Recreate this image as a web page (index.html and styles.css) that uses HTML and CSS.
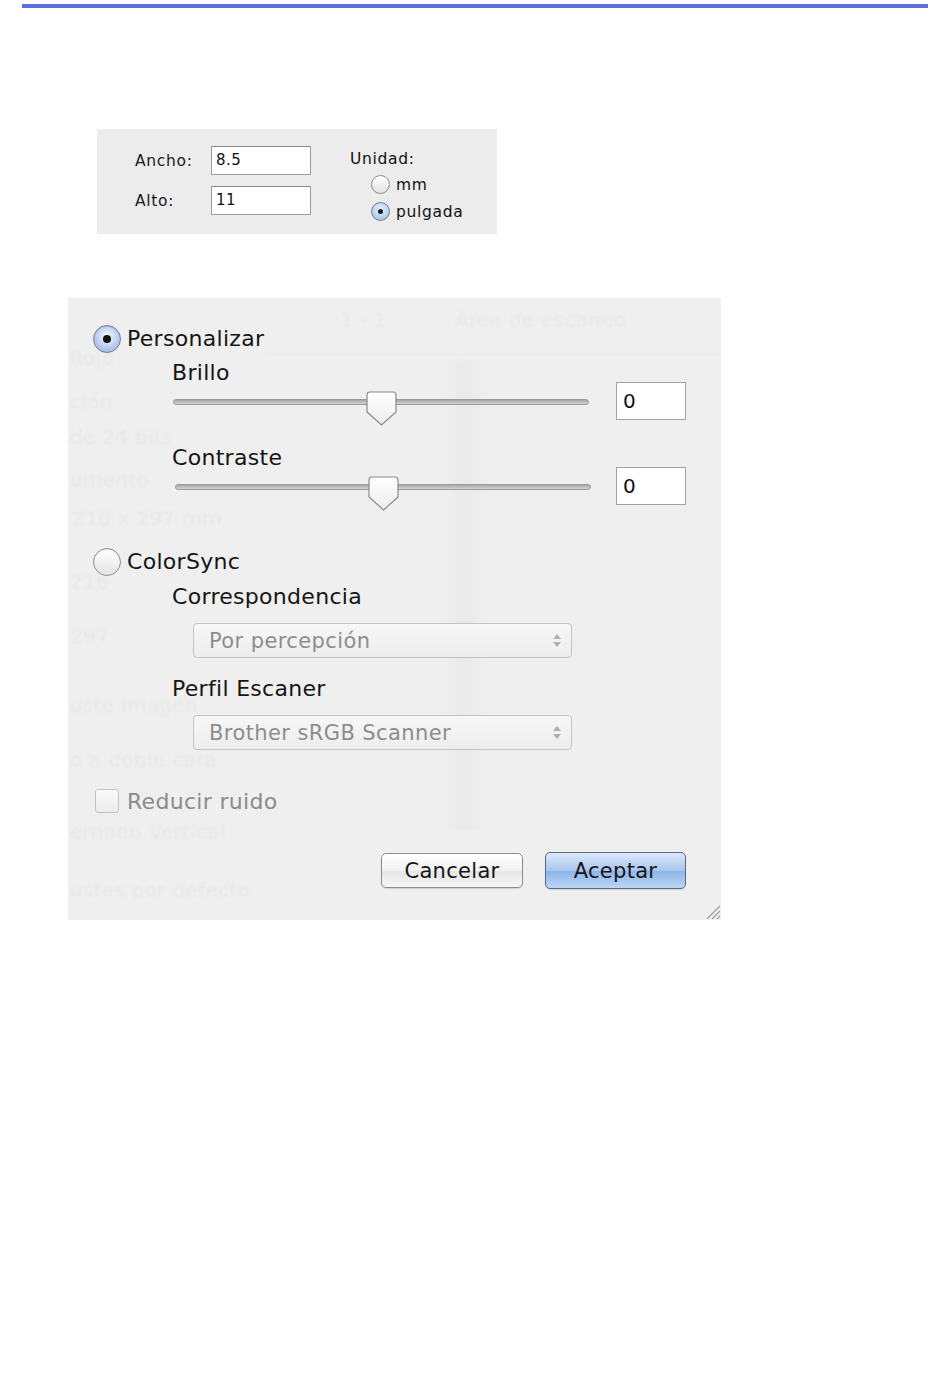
FILE: index.html
```html
<!DOCTYPE html>
<html>
<head>
  <meta charset="UTF-8">
  <title>Ajustes de escaneo</title>
  <link rel="stylesheet" href="styles.css">
</head>
<body>
  <div class="rule"></div>

  <!-- Tamaño de documento personalizado -->
  <div class="size-panel">
    <div class="size-fields">
      <div class="field-row">
        <span class="field-label">Ancho:</span>
        <div class="text-box">8.5</div>
      </div>
      <div class="field-row">
        <span class="field-label">Alto:</span>
        <div class="text-box">11</div>
      </div>
    </div>
    <div class="unit-group">
      <div class="unit-title">Unidad:</div>
      <div class="unit-option"><span class="mini-radio"></span>mm</div>
      <div class="unit-option"><span class="mini-radio checked"></span>pulgada</div>
    </div>
  </div>

  <!-- Diálogo de ajuste de color -->
  <div class="dialog">
    <div class="ghost">
      <span class="g1">1 - 1</span>
      <span class="g2">Área de escaneo</span>
      <span class="g3">Rojo</span>
      <span class="g4">ción</span>
      <span class="g5">de 24 bits</span>
      <span class="g6">umento</span>
      <span class="g7">210 x 297 mm</span>
      <span class="g8">216</span>
      <span class="g9">297</span>
      <span class="g10">uste imagen</span>
      <span class="g11">o a doble cara</span>
      <span class="g12">ernado Vertical</span>
      <span class="g13">ustes por defecto</span>
      <div class="ghost-strip"></div>
      <div class="ghost-line"></div>
    </div>

    <div class="option-row first">
      <span class="radio checked"></span>
      <span class="option-label">Personalizar</span>
    </div>

    <div class="sub-label brillo">Brillo</div>
    <div class="slider-row">
      <div class="slider">
        <div class="track"></div>
        <svg class="thumb" width="31" height="35" viewBox="0 0 31 35">
          <defs>
            <linearGradient id="tg1" x1="0" y1="0" x2="0" y2="1">
              <stop offset="0" stop-color="#ffffff"/>
              <stop offset="1" stop-color="#ececec"/>
            </linearGradient>
          </defs>
          <path d="M4 1 H27 Q30 1 30 4 V21 L15.5 34 L1 21 V4 Q1 1 4 1 Z" fill="url(#tg1)" stroke="#8a8a8a" stroke-width="1.2"/>
        </svg>
      </div>
      <div class="value-box">0</div>
    </div>

    <div class="sub-label contraste">Contraste</div>
    <div class="slider-row second">
      <div class="slider">
        <div class="track"></div>
        <svg class="thumb" width="31" height="35" viewBox="0 0 31 35">
          <path d="M4 1 H27 Q30 1 30 4 V21 L15.5 34 L1 21 V4 Q1 1 4 1 Z" fill="url(#tg1)" stroke="#8a8a8a" stroke-width="1.2"/>
        </svg>
      </div>
      <div class="value-box">0</div>
    </div>

    <div class="option-row colorsync">
      <span class="radio"></span>
      <span class="option-label">ColorSync</span>
    </div>

    <div class="sub-label corr">Correspondencia</div>
    <div class="popup first-popup">
      <span>Por percepción</span>
      <span class="popup-arrows"><i class="up"></i><i class="down"></i></span>
    </div>

    <div class="sub-label perfil">Perfil Escaner</div>
    <div class="popup second-popup">
      <span>Brother sRGB Scanner</span>
      <span class="popup-arrows"><i class="up"></i><i class="down"></i></span>
    </div>

    <div class="check-row">
      <span class="checkbox"></span>
      <span class="check-label">Reducir ruido</span>
    </div>

    <div class="button-row">
      <button class="btn">Cancelar</button>
      <button class="btn primary">Aceptar</button>
    </div>

    <svg class="grip" width="16" height="16" viewBox="0 0 16 16">
      <path d="M3 16 L16 3 M8 16 L16 8 M13 16 L16 13" stroke="#9a9a9a" stroke-width="1.2"/>
    </svg>
  </div>
</body>
</html>
```

FILE: styles.css
```css
* {
  margin: 0;
  padding: 0;
  box-sizing: border-box;
}

body {
  font-family: "DejaVu Sans", Verdana, sans-serif;
  background: #ffffff;
  color: #111;
  width: 950px;
  height: 1387px;
}

.rule {
  margin: 4px 0 0 22px;
  width: 906px;
  height: 4px;
  background: #5a70d6;
}

/* Small size panel */
.size-panel {
  margin: 121px 0 0 97px;
  width: 400px;
  height: 105px;
  background: #ececec;
  padding: 17px 0 0 38px;
  display: flex;
  gap: 39px;
  font-size: 15.5px;
  letter-spacing: 0.7px;
}

.size-fields {
  display: flex;
  flex-direction: column;
  gap: 11px;
}

.field-row {
  display: flex;
  align-items: center;
}

.field-label {
  width: 76px;
  color: #1a1a1a;
}

.text-box {
  width: 100px;
  height: 29px;
  background: #fff;
  border: 1px solid #9d9d9d;
  border-top-color: #8a8a8a;
  padding: 4px 0 0 4px;
  font-size: 15px;
  letter-spacing: 0.5px;
  color: #111;
}

.unit-group {
  padding-top: 4px;
}

.unit-title {
  height: 20px;
  line-height: 18px;
  margin-bottom: 5px;
}

.unit-option {
  display: flex;
  align-items: center;
  gap: 6px;
  height: 19px;
  margin: 0 0 8px 21px;
}

.mini-radio {
  width: 19px;
  height: 19px;
  border-radius: 50%;
  border: 1px solid #8c8c8c;
  background: linear-gradient(#ffffff, #e2e2e2);
  position: relative;
}

.mini-radio.checked {
  background: radial-gradient(circle at 50% 35%, #e6effb, #9bbbe6);
  border-color: #6d7f9c;
}

.mini-radio.checked::after {
  content: "";
  position: absolute;
  left: 6px;
  top: 6px;
  width: 5px;
  height: 5px;
  border-radius: 50%;
  background: #1b1b1b;
}

/* Color dialog */
.dialog {
  position: relative;
  margin: 64px 0 0 68px;
  width: 653px;
  height: 622px;
  background: #efefef;
  font-size: 22px;
  letter-spacing: 0.3px;
  overflow: hidden;
}

.ghost {
  position: absolute;
  inset: 0;
  color: #e6e6e6;
  font-size: 20px;
  pointer-events: none;
  filter: blur(0.8px);
}

.ghost span {
  position: absolute;
  white-space: nowrap;
}

.ghost .g1 { left: 272px; top: 10px; }
.ghost .g2 { left: 387px; top: 10px; }
.ghost .g3 { left: 2px; top: 48px; }
.ghost .g4 { left: 2px; top: 92px; }
.ghost .g5 { left: 2px; top: 127px; }
.ghost .g6 { left: 2px; top: 170px; }
.ghost .g7 { left: 4px; top: 208px; }
.ghost .g8 { left: 2px; top: 272px; }
.ghost .g9 { left: 2px; top: 326px; }
.ghost .g10 { left: 2px; top: 395px; }
.ghost .g11 { left: 2px; top: 450px; }
.ghost .g12 { left: 2px; top: 522px; }
.ghost .g13 { left: 2px; top: 580px; }

.ghost-strip {
  position: absolute;
  left: 378px;
  top: 62px;
  width: 42px;
  height: 470px;
  background: linear-gradient(90deg, #efefef, #e9e9e9 40%, #ebebeb 60%, #efefef);
}

.ghost-line {
  position: absolute;
  left: 200px;
  top: 56px;
  width: 453px;
  height: 1px;
  background: #e8e8e8;
}

.dialog > * {
  position: relative;
}

.dialog > .ghost,
.dialog > .grip {
  position: absolute;
}

.option-row {
  display: flex;
  align-items: center;
  gap: 6px;
  height: 28px;
  margin-left: 25px;
}

.option-row.first {
  margin-top: 27px;
}

.option-row.colorsync {
  margin-top: 43px;
}

.radio {
  width: 28px;
  height: 28px;
  border-radius: 50%;
  border: 1px solid #8e8e8e;
  background: linear-gradient(#ffffff, #e4e4e4);
  box-shadow: inset 0 1px 1px rgba(0,0,0,0.1);
  position: relative;
}

.radio.checked {
  border-color: #717f97;
  background: radial-gradient(circle at 50% 40%, #eef4fc 10%, #b7cdee 55%, #8eaedc 100%);
}

.radio.checked::after {
  content: "";
  position: absolute;
  left: 9px;
  top: 9px;
  width: 8px;
  height: 8px;
  border-radius: 50%;
  background: #151515;
}

.option-label {
  line-height: 28px;
  color: #151515;
}

.sub-label {
  margin-left: 104px;
  height: 20px;
  line-height: 20px;
  color: #151515;
}

.sub-label.brillo { margin-top: 10px; }
.sub-label.contraste { margin-top: 28px; }
.sub-label.corr { margin-top: 11px; }
.sub-label.perfil { margin-top: 21px; }

.slider-row {
  display: flex;
  align-items: center;
  height: 38px;
  margin: -1px 0 0 105px;
  gap: 27px;
}

.slider {
  position: relative;
  width: 416px;
  height: 38px;
}

.track {
  position: absolute;
  left: 0;
  right: 0;
  top: 17px;
  height: 6px;
  border-radius: 3px;
  border: 1px solid #9b9b9b;
  background: linear-gradient(#a6a6a6, #d4d4d4);
}

.slider-row.second .track {
  left: 2px;
  right: -2px;
}

.slider-row.second .thumb {
  left: 195px;
}

.thumb {
  position: absolute;
  left: 193px;
  top: 9px;
}

.value-box {
  width: 70px;
  height: 38px;
  background: #fff;
  border: 1px solid #a2a2a2;
  padding: 6px 0 0 6px;
  font-size: 20px;
  color: #111;
}

.popup {
  display: flex;
  align-items: center;
  justify-content: space-between;
  margin-left: 125px;
  width: 379px;
  height: 35px;
  padding: 0 10px 0 15px;
  border: 1px solid #c4c4c4;
  border-radius: 4px;
  background: linear-gradient(#f7f7f7, #ededed);
  color: #8d8d8d;
  font-size: 21px;
  letter-spacing: 0.4px;
}

.first-popup { margin-top: 16px; }
.second-popup { margin-top: 16px; }

.popup-arrows {
  display: flex;
  flex-direction: column;
  gap: 3px;
}

.popup-arrows i {
  display: block;
  width: 0;
  height: 0;
  border-left: 4px solid transparent;
  border-right: 4px solid transparent;
}

.popup-arrows .up {
  border-bottom: 5px solid #b0b0b0;
}

.popup-arrows .down {
  border-top: 5px solid #b0b0b0;
}

.check-row {
  display: flex;
  align-items: center;
  gap: 8px;
  height: 24px;
  margin: 39px 0 0 27px;
}

.checkbox {
  width: 24px;
  height: 24px;
  border: 1px solid #c2c2c2;
  border-radius: 3px;
  background: linear-gradient(#fafafa, #ececec);
}

.check-label {
  color: #8b8b8b;
}

.button-row {
  display: flex;
  justify-content: flex-end;
  align-items: center;
  gap: 22px;
  height: 37px;
  margin-top: 39px;
  padding-right: 35px;
}

.btn {
  width: 142px;
  height: 35px;
  border: 1px solid #8d8d8d;
  border-radius: 5px;
  background: linear-gradient(#ffffff, #f1f1f1 50%, #e6e6e6 51%, #f6f6f6);
  font-family: "DejaVu Sans", Verdana, sans-serif;
  font-size: 21px;
  letter-spacing: 0.3px;
  color: #151515;
  box-shadow: 0 1px 1px rgba(0,0,0,0.12);
}

.btn.primary {
  width: 141px;
  height: 37px;
  border-color: #5a6886;
  background: linear-gradient(#dce8f8, #a9c6ee 50%, #8cb4e9 51%, #bcd6f5);
}

.grip {
  right: 1px;
  bottom: 1px;
}
```
